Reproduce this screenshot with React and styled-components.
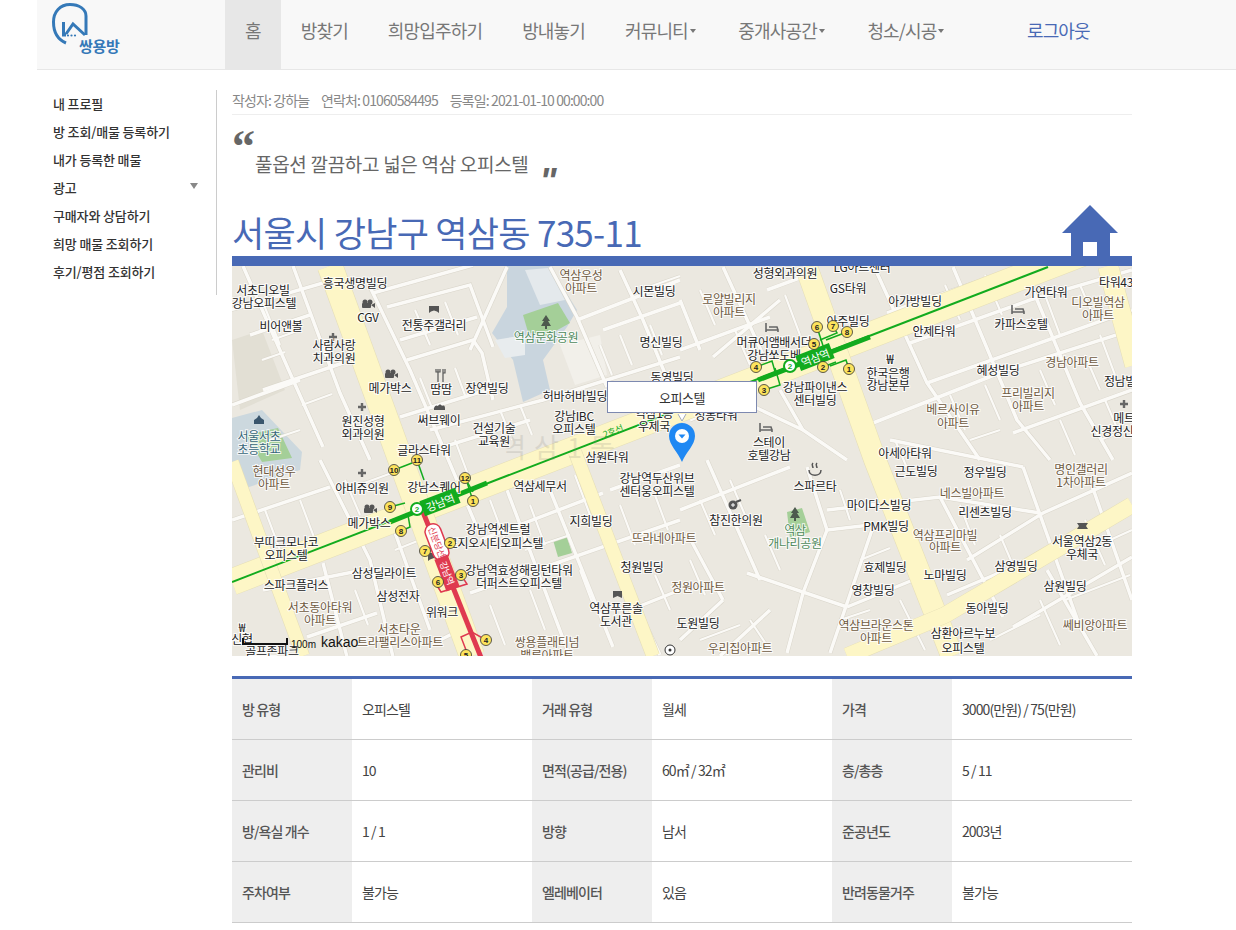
import React from 'react'
import styled, { createGlobalStyle } from 'styled-components'

const BLUE = '#4869b5'
const LOGO_BLUE = '#3579b8'
const FONT = '"Noto Sans CJK KR", "Noto Sans", sans-serif'

const GlobalStyle = createGlobalStyle`
  html, body {
    margin: 0;
    padding: 0;
    background: #fff;
    font-family: ${FONT};
  }
`

const Page = styled.div`
  width: 1236px;
  padding-left: 37px;
  box-sizing: border-box;
`

const Header = styled.header`
  display: flex;
  height: 70px;
  box-sizing: border-box;
  background: #f8f8f8;
  border-bottom: 1px solid #e7e7e7;
`

const LogoBox = styled.a`
  display: block;
  width: 188px;
  flex: none;
`

const Nav = styled.nav`
  display: flex;
  height: 69px;
`

const NavItem = styled.a`
  display: flex;
  align-items: center;
  padding: 0 20px 10px;
  margin-left: ${props => props.$offset || 0}px;
  font-size: 18px;
  letter-spacing: -0.85px;
  color: ${props => (props.$logout ? BLUE : '#777')};
  background: ${props => (props.$active ? '#e7e7e7' : 'transparent')};
`

const Caret = styled.span`
  display: inline-block;
  margin: 3px 0 0 2px;
  padding-right: 0;
  border-top: 4px solid #777;
  border-left: 3.5px solid transparent;
  border-right: 3.5px solid transparent;
  box-sizing: content-box;
  margin-right: 2.5px;
`

const Body = styled.div`
  display: flex;
  padding-top: 20px;
`

const Sidebar = styled.aside`
  width: 163px;
  height: 205px;
  flex: none;
  padding-left: 16px;
  border-right: 1px solid #ccc;
  margin-right: 15px;
`

const SideList = styled.ul`
  list-style: none;
  margin: -1px 0 0;
  padding: 0;
`

const SideItem = styled.li`
  display: flex;
  align-items: center;
  justify-content: space-between;
  height: 28px;
  padding-right: 18px;
  font-size: 13px;
  font-weight: 500;
  letter-spacing: -0.15px;
  color: #333;
`

const SideCaret = styled.span`
  display: block;
  margin-top: -2px;
  border-top: 6px solid #888;
  border-left: 4px solid transparent;
  border-right: 4px solid transparent;
`

const Main = styled.main`
  width: 900px;
  flex: none;
`

const Meta = styled.div`
  display: flex;
  gap: 12px;
  height: 25px;
  align-items: center;
  border-bottom: 1px solid #eee;
  padding-bottom: 4px;
  box-sizing: border-box;
  font-size: 14px;
  letter-spacing: -0.9px;
  color: #888;
`

const Quote = styled.blockquote`
  margin: 0;
  height: 66px;
  padding-top: 8px;
  color: #666;
`

const QuoteOpen = styled.div`
  height: 28px;
  font-family: "Liberation Serif", serif;
  font-weight: 700;
  font-size: 46px;
  line-height: 48px;
  color: #666;
  overflow: hidden;
`

const QuoteText = styled.span`
  margin-left: 23px;
  font-size: 19px;
  line-height: 26px;
  letter-spacing: -0.3px;
`

const QuoteClose = styled.span`
  margin-left: 11px;
  font-family: "Liberation Sans", sans-serif;
  font-style: italic;
  font-weight: 700;
  font-size: 36px;
  line-height: 26px;
  vertical-align: -22px;
  color: #666;
`

const TitleRow = styled.div`
  display: flex;
  align-items: flex-end;
  justify-content: space-between;
  height: 67px;
  border-bottom: 10px solid ${BLUE};
`

const Title = styled.h1`
  margin: 0 0 -1px;
  font-size: 35px;
  font-weight: 400;
  line-height: 50px;
  letter-spacing: -0.7px;
  color: ${BLUE};
`

const HouseIcon = styled.svg`
  display: block;
  margin-right: 14px;
`

const MapCanvas = styled.div`
  position: relative;
  height: 390px;
  overflow: hidden;
  background: #ebe8e0;
`

const MapDrawing = styled.svg`
  display: block;
`

const MapLabel = styled.text`
  font-family: ${FONT};
  font-size: ${props => props.$size || 12}px;
  letter-spacing: -0.3px;
  text-anchor: middle;
  dominant-baseline: central;
  paint-order: stroke;
  stroke: rgba(255, 255, 255, 0.85);
  stroke-width: 2px;
  fill: ${props => ({ brown: '#6f5a41', green: '#4f8a5c', teal: '#37677a' }[props.$kind] || '#222')};
`

const BadgeText = styled.text`
  font-family: "Liberation Sans", sans-serif;
  font-size: 8px;
  font-weight: 700;
  text-anchor: middle;
  dominant-baseline: central;
  fill: ${props => props.$fill || '#222'};
`

const StationText = styled.text`
  font-family: ${FONT};
  font-size: ${props => props.$size || 11}px;
  letter-spacing: -0.3px;
  text-anchor: middle;
  dominant-baseline: central;
  fill: ${props => props.$fill || '#fff'};
`

const Watermark = styled.text`
  font-family: ${FONT};
  font-size: 27px;
  letter-spacing: 8px;
  text-anchor: middle;
  fill: #8d8a80;
  opacity: 0.2;
`

const KakaoText = styled.text`
  font-family: "Liberation Sans", sans-serif;
  font-size: ${props => props.$size}px;
  fill: #111;
`

const InfoWindow = styled.div`
  position: absolute;
  left: 375px;
  top: 115px;
  width: 150px;
  height: 32px;
  box-sizing: border-box;
  display: flex;
  align-items: center;
  justify-content: center;
  background: #fff;
  border: 1px solid #7d89b0;
  font-size: 13px;
  letter-spacing: -0.4px;
  color: #333;
`

const TableWrap = styled.div`
  margin-top: 20px;
  border-top: 3px solid ${BLUE};
`

const DetailTable = styled.table`
  width: 900px;
  border-collapse: collapse;
  table-layout: fixed;
`

const Row = styled.tr`
  height: 61px;
  border-bottom: 1px solid #ccc;

  &:first-child {
    height: 60px;
  }
`

const HeadCell = styled.th`
  width: 120px;
  padding: 0 0 0 10px;
  box-sizing: border-box;
  background: #eee;
  text-align: left;
  font-size: 14px;
  font-weight: 500;
  letter-spacing: -0.9px;
  color: #555;
`

const ValueCell = styled.td`
  width: 180px;
  padding: 0 0 0 10px;
  box-sizing: border-box;
  font-size: 14px;
  letter-spacing: -0.9px;
  color: #444;
`

const sideItems = ['내 프로필', '방 조회/매물 등록하기', '내가 등록한 매물', '광고', '구매자와 상담하기', '희망 매물 조회하기', '후기/평점 조회하기']

const rows = [
  ['방 유형', '오피스텔', '거래 유형', '월세', '가격', '3000(만원) / 75(만원)'],
  ['관리비', '10', '면적(공급/전용)', '60㎡ / 32㎡', '층/총층', '5 / 11'],
  ['방/욕실 개수', '1 / 1', '방향', '남서', '준공년도', '2003년'],
  ['주차여부', '불가능', '엘레베이터', '있음', '반려동물거주', '불가능'],
]

const bigRoads = [
  ['232,582 1132,234', 26],
  ['330,266 472,656', 25],
  ['806,266 875,460 952,656', 22],
  ['1132,505 945,615 847,656', 16],
  ['1108,266 1135,365', 20],
  ['232,462 303,656', 13],
  ['575,452 653,656', 13],
]

const smallRoads = [
  // 좌상단
  '243,266 290,373 323,447', '293,266 340,393 370,460', '230,310 323,283', '263,390 343,363',
  '370,287 410,370 443,447 478,530', '373,293 473,265', '387,307 470,285 493,347', '400,340 477,317',
  '407,360 473,340 482,353 493,400', '400,417 493,388', '430,430 543,400 680,357', '470,350 507,267',
  '550,267 577,317 607,387', '577,320 680,280', '603,330 680,303', '620,270 643,320 680,410',
  '232,405 300,380', '250,335 310,315', '443,447 530,420',
  // 우상단
  '723,267 770,370', '713,357 780,300', '680,350 770,317', '767,290 813,273', '877,273 927,383 980,460',
  '953,267 1017,420 1050,460', '1030,283 1080,403 1113,460', '887,313 1013,270', '910,343 1030,300 1132,270',
  '873,423 1007,370 1132,330', '927,383 1020,350 1132,310', '1013,433 1132,390', '780,390 803,430 847,460',
  '690,420 740,400 803,430', '680,300 700,350',
  // 좌하단
  '320,460 370,560 393,657', '323,563 347,657', '393,527 430,630', '470,593 680,520', '507,490 570,657',
  '550,490 613,647', '480,540 603,493', '263,590 363,570', '307,637 377,613', '232,520 330,487', '440,640 470,625',
  '610,490 680,465', '615,560 660,655', '630,610 680,590',
  // 우하단
  '680,510 790,467', '687,533 723,600', '707,460 760,580', '747,573 847,607', '807,467 827,530 803,593 787,653',
  '827,530 870,525', '873,527 830,653', '847,607 913,580', '827,510 940,497 1040,513', '940,497 1003,617',
  '1023,467 1080,627', '967,560 1043,513 1132,473', '947,595 1013,567', '1013,627 1132,557', '1047,570 1097,656',
  '890,440 1023,467', '723,600 680,640', '770,610 720,656', '1090,480 1132,600',
]

const alleys = [
  '262,300 280,345', '300,330 272,340', '270,440 300,430', '302,405 332,394', '262,360 285,352',
  '415,310 430,345', '445,302 458,335', '420,378 432,408', '455,368 466,398', '500,410 512,440',
  '520,405 532,435', '455,440 470,480', '600,345 612,375', '620,335 632,365', '650,325 662,355',
  '640,290 680,276', '700,290 715,325', '735,330 750,365', '785,295 800,335', '905,300 920,335',
  '945,285 960,320', '985,275 1002,315', '1045,295 1060,335', '1080,285 1095,320', '1100,335 1115,375',
  '950,395 965,430', '985,385 1000,420', '1040,370 1055,405', '1085,355 1100,390', '1105,400 1120,435',
  '895,440 910,475', '1060,420 1075,455', '970,440 1000,430', '1100,440 1125,430',
  '345,480 360,515', '400,470 345,490', '300,500 315,540', '265,510 280,550', '355,590 368,625',
  '420,540 395,550', '490,500 505,540', '530,505 545,545', '575,475 590,515', '525,550 570,535',
  '490,605 505,645', '530,590 545,630', '580,570 595,610', '620,505 635,545', '655,495 668,530',
  '700,500 715,535', '730,480 745,515', '765,535 780,570', '840,490 850,520', '900,510 915,550',
  '860,560 890,548', '840,620 870,610', '900,600 925,650', '960,505 975,545', '1000,535 1015,570',
  '1040,600 1060,645', '1085,520 1105,565', '1110,540 1132,530', '1065,600 1130,575', '990,640 1040,615',
  '700,640 740,625', '750,620 770,650', '655,575 670,610', '690,560 705,595',
]

const blocks = [
  ['507,266 550,266 577,310 567,327 543,360 550,390 523,402 513,360 492,333 507,307', '#c9d5de'],
  ['232,418 262,410 302,452 300,470 240,490 232,470', '#ccd8de'],
  ['523,315 558,303 570,323 545,337 528,332', '#a4cf98'],
  ['246,435 278,428 292,458 262,462', '#a4cf98'],
  ['787,512 802,508 810,532 790,538', '#a4cf98'],
  ['553,540 567,537 572,553 558,557', '#a4cf98'],
  ['495,340 525,335 525,355 505,358', '#e8ecee'],
  ['525,270 548,268 565,300 540,305', '#e4e9ec'],
  ['232,340 262,330 285,390 240,410', '#e2dfd4'],
  ['560,345 600,335 607,375 575,385', '#f2f0ea'],
]

const labels = [
  ['서초디오빌', 263, 289], ['강남오피스텔', 264, 302], ['비어앤볼', 281, 325], ['사람사랑', 334, 344], ['치과의원', 334, 357],
  ['메가박스', 390, 387], ['CGV', 368, 316], ['흥국생명빌딩', 355, 282], ['전통주갤러리', 434, 324], ['땀땀', 441, 388],
  ['장연빌딩', 487, 387], ['써브웨이', 439, 419], ['건설기술', 494, 427], ['교육원', 494, 440], ['허바허바빌딩', 575, 395],
  ['강남IBC', 574, 415], ['오피스텔', 574, 428], ['역삼우성', 581, 274, 'brown'], ['아파트', 581, 287, 'brown'], ['시몬빌딩', 654, 290],
  ['역삼문화공원', 546, 336, 'green'], ['명신빌딩', 661, 341], ['동영빌딩', 672, 376], ['원진성형', 363, 420], ['외과의원', 363, 433],
  ['글라스타워', 424, 449], ['서울서초', 259, 435, 'teal'], ['초등학교', 259, 448, 'teal'], ['삼원타워', 607, 456], ['현대성우', 274, 470, 'brown'],
  ['아파트', 274, 483, 'brown'], ['성형외과의원', 785, 272], ['LG아트센터', 862, 266], ['GS타워', 848, 287], ['아가방빌딩', 915, 300],
  ['가연타워', 1046, 291], ['타워43', 1116, 281], ['디오빌역삼', 1098, 301, 'brown'], ['아파트', 1098, 314, 'brown'], ['카파스호텔', 1021, 323],
  ['안제타워', 934, 330], ['로얄빌리지', 729, 298, 'brown'], ['아파트', 729, 311, 'brown'], ['아주빌딩', 848, 320], ['머큐어앰배서더', 774, 341],
  ['강남쏘도베', 774, 354], ['한국은행', 888, 372], ['강남본부', 888, 384], ['혜성빌딩', 998, 369], ['경남아파트', 1072, 361, 'brown'],
  ['정남빌', 1120, 380], ['강남파이낸스', 815, 386], ['센터빌딩', 815, 399], ['프리빌리지', 1028, 392, 'brown'], ['아파트', 1028, 405, 'brown'],
  ['베르사이유', 953, 408, 'brown'], ['아파트', 953, 422, 'brown'], ['메트', 1124, 417], ['신경정신', 1112, 430], ['스테이', 769, 441],
  ['호텔강남', 769, 454], ['아세아타워', 905, 452], ['성동타워', 716, 414], ['역삼1동', 654, 412], ['우제국', 654, 425],
  ['근도빌딩', 916, 470], ['정우빌딩', 985, 471], ['명인갤러리', 1081, 468, 'brown'], ['1차아파트', 1081, 481, 'brown'], ['스파르타', 815, 485],
  ['네스빌아파트', 972, 492, 'brown'], ['마이다스빌딩', 879, 504], ['리센츠빌딩', 985, 511], ['PMK빌딩', 886, 525], ['역삼프리마빌', 945, 534, 'brown'],
  ['아파트', 945, 546, 'brown'], ['역삼', 795, 529, 'green'], ['개나리공원', 795, 542, 'green'], ['참진한의원', 736, 519], ['노마빌딩', 945, 574],
  ['삼영빌딩', 1016, 565], ['서울역삼2동', 1082, 540], ['우체국', 1082, 553], ['효제빌딩', 885, 566], ['영창빌딩', 873, 589],
  ['삼원빌딩', 1065, 585], ['동아빌딩', 987, 607], ['쎄비앙아파트', 1095, 624, 'brown'], ['역삼브라운스톤', 876, 624, 'brown'], ['아파트', 876, 637, 'brown'],
  ['삼환아르누보', 963, 632], ['오피스텔', 963, 647], ['도원빌딩', 698, 622], ['우리집아파트', 740, 647, 'brown'], ['정원아파트', 698, 586, 'brown'],
  ['강남역두산위브', 657, 477], ['센터웅오피스텔', 657, 490], ['역삼세무서', 540, 485], ['지희빌딩', 591, 520], ['뜨라네아파트', 664, 537, 'brown'],
  ['청원빌딩', 642, 566], ['강남스퀘어', 434, 486], ['아비쥬의원', 362, 487], ['메가박스', 369, 522], ['부띠크모나코', 286, 541],
  ['오피스텔', 286, 554], ['스파크플러스', 296, 584], ['서초동아타워', 320, 606, 'brown'], ['아파트', 320, 619, 'brown'], ['삼성딜라이트', 384, 572],
  ['삼성전자', 398, 595], ['위워크', 442, 611], ['서초타운', 399, 628, 'brown'], ['트라팰리스아파트', 400, 641, 'brown'], ['강남역센트럴', 498, 528],
  ['르지오시티오피스텔', 495, 542], ['강남역효성해링턴타워', 519, 569], ['더퍼스트오피스텔', 519, 582], ['쌍용플래티넘', 547, 641, 'brown'], ['밸류아파트', 547, 654, 'brown'],
  ['역삼푸른솔', 616, 607], ['도서관', 616, 620], ['신협', 242, 638], ['골프존파크', 272, 650],
]

const exits = [
  [1, 849, 369], [2, 823, 367], [3, 764, 390], [4, 756, 367], [5, 814, 344], [6, 817, 327], [7, 833, 326], [8, 847, 332],
  [10, 394, 470], [11, 417, 460], [12, 465, 478], [1, 473, 501], [9, 390, 507], [8, 401, 531], [7, 425, 551], [2, 450, 543],
  [3, 461, 575], [6, 438, 582], [4, 486, 640], [5, 466, 655],
]

const greenLinks = [
  '849,369 846,360 830,366', '823,367 836,362', '764,390 780,385 775,368', '756,367 772,361 776,375', '814,344 822,362',
  '817,327 826,355', '833,326 837,333 820,340', '847,332 826,340', '394,470 412,463', '417,460 424,480',
  '465,478 473,492', '473,501 467,482', '390,507 405,503', '401,531 410,527 408,515', '425,551 434,546',
]

const redLinks = ['461,575 467,584 441,592 436,584', '486,640 472,632 461,637 466,650']

const crosses = [[333, 337], [362, 407], [362, 473], [1124, 404]]
const cameras = [[368, 304], [391, 374], [370, 509]]
const beds = [[772, 328], [1018, 310], [766, 428]]

const Logo = () => (
  <svg width="100" height="64" viewBox="0 0 100 64">
    <path d="M49 35 V16 C49 9 42 4.500 33 4.500 C23 4.500 16.500 12 16.500 22 C16.500 33 22 40 29 43" fill="none" stroke={LOGO_BLUE} strokeWidth="3" />
    <path d="M26.500 22 V35 H29 M29 34 L36 24 L48 35" fill="none" stroke={LOGO_BLUE} strokeWidth="3" />
    <circle cx="31" cy="35.500" r="1.100" fill={LOGO_BLUE} />
    <circle cx="34.500" cy="35.500" r="1.100" fill={LOGO_BLUE} />
    <circle cx="38" cy="35.500" r="1.100" fill={LOGO_BLUE} />
    <text x="42" y="52" fontSize="15" fontWeight="700" letterSpacing="-0.3" fill={LOGO_BLUE} fontFamily={FONT}>쌍용방</text>
  </svg>
)

const House = () => (
  <HouseIcon width="56" height="51" viewBox="0 0 56 51">
    <path d="M28 0 L56 28 H48 V51 H9 V28 H0 Z" fill={BLUE} />
    <rect x="21" y="37" width="14" height="14" fill="#fff" />
  </HouseIcon>
)

const CityMap = () => (
  <MapDrawing width="900" height="390" viewBox="232 266 900 390">
    {blocks.map(([points, fill]) => <polygon key={points} points={points} fill={fill} />)}
    {smallRoads.map(points => (
      <polyline key={points} points={points} fill="none" stroke="#d9d5ca" strokeWidth="4.500" />
    ))}
    {alleys.map(points => (
      <polyline key={points} points={points} fill="none" stroke="#d9d5ca" strokeWidth="3.200" />
    ))}
    {smallRoads.map(points => (
      <polyline key={points} points={points} fill="none" stroke="#fbfaf7" strokeWidth="3.500" />
    ))}
    {alleys.map(points => (
      <polyline key={points} points={points} fill="none" stroke="#fbfaf7" strokeWidth="2.200" />
    ))}
    {bigRoads.map(([points, width]) => (
      <g key={points} fill="none">
        <polyline points={points} stroke="#e4ddb6" strokeWidth={width + 1} />
        <polyline points={points} stroke="#fdf6c6" strokeWidth={width} />
      </g>
    ))}

    {/* 2호선, 신분당선 */}
    <line x1="232" y1="582" x2="1048" y2="267" stroke="#12ab1e" strokeWidth="2" />
    <line x1="758" y1="380" x2="870" y2="337" stroke="#12ab1e" strokeWidth="5" />
    <line x1="390" y1="522" x2="487" y2="483" stroke="#12ab1e" strokeWidth="5" />
    <line x1="423" y1="512" x2="490" y2="680" stroke="#df3a50" strokeWidth="5" />
    {greenLinks.map(points => (
      <polyline key={points} points={points} fill="none" stroke="#12ab1e" strokeWidth="1.500" />
    ))}
    {redLinks.map(points => (
      <polyline key={points} points={points} fill="none" stroke="#df3a50" strokeWidth="1.500" />
    ))}

    <Watermark x="562" y="458">역삼1동</Watermark>

    {/* 지도 아이콘 */}
    {crosses.map(([x, y]) => (
      <path key={x} d={`M${x - 4} ${y}H${x + 4}M${x} ${y - 4}V${y + 4}`} stroke="#666" strokeWidth="2.400" />
    ))}
    {cameras.map(([x, y]) => (
      <g key={x} fill="#555">
        <circle cx={x - 3} cy={y - 2} r="2.500" />
        <circle cx={x + 2} cy={y - 2} r="2.500" />
        <rect x={x - 6} y={y - 1} width="9" height="5" rx="1" />
        <path d={`M${x + 3} ${y + 1}l4 -2v5z`} />
      </g>
    ))}
    {beds.map(([x, y]) => (
      <path key={x} d={`M${x - 6} ${y - 5}v9M${x - 6} ${y + 2}h12v2M${x - 3} ${y - 1}h8l1 3`} fill="none" stroke="#666" strokeWidth="1.600" />
    ))}
    <path d="M429 306h10v7l-2 -1.500 -3 -1 -3 1 -2 1.500z" fill="#555" />
    <path d="M428 553h11v8l-2 -1.500 -3 -1.500 -4 1.500 -2 1.500z" fill="#555" />
    <path d="M438 369v6M436 369v3h4v-3M443 369v13M438 375v7M445 369v4h-2" fill="none" stroke="#555" strokeWidth="1.200" />
    <path d="M434 408c1-3 3-3 4-2 1-2 3-2 4 0 2-1 3 0 3 2v2h-11z" fill="#555" />
    <path d="M546 315l-4 6h2l-3 5h10l-3-5h2zM545 326h2v3h-2z" fill="#4d5a4e" />
    <path d="M795 507l-4 6h2l-3 5h10l-3-5h2zM794 518h2v3h-2z" fill="#4d5a4e" />
    <path d="M259 415l-2 3-3 2v4h10v-4l-3-2z" fill="#3a566d" />
    <path d="M813 463c-2 2 0 3 0 5M817 463c-2 2 0 3 0 5M809 470c0 7 12 7 12 0" fill="none" stroke="#555" strokeWidth="1.500" />
    <path d="M613 591h9v7l-4.500-2-4.500 2z" fill="#555" />
    <circle cx="733" cy="505" r="4.500" fill="#555" />
    <path d="M736 502l5-2" stroke="#555" strokeWidth="2" />
    <path d="M735 505h-4M733 503v4" stroke="#fff" strokeWidth="1" />
    <path d="M1077 523h11l-2 3 2 3h-11l2-3z" fill="#555" />
    <MapLabel x="890" y="358" $size="13">₩</MapLabel>
    <MapLabel x="242" y="626" $size="12">₩</MapLabel>

    {labels.map(([text, x, y, kind]) => (
      <MapLabel key={`${text}${x}${y}`} x={x} y={y} $kind={kind}>{text}</MapLabel>
    ))}

    <StationText x="613" y="431" $size="9" $fill="#12ab1e" transform="rotate(-21 613 431)">2호선</StationText>

    {/* 역 표시 */}
    <g transform="rotate(-21 815 357)">
      <rect x="797" y="349" width="36" height="16" fill="#12ab1e" />
      <StationText x="815" y="357">역삼역</StationText>
    </g>
    <circle cx="790" cy="366" r="6" fill="#fff" stroke="#12ab1e" strokeWidth="2" />
    <BadgeText x="790" y="366" $fill="#12ab1e">2</BadgeText>
    <g transform="rotate(-21 440 502)">
      <rect x="421" y="494" width="38" height="16" fill="#12ab1e" />
      <StationText x="440" y="502">강남역</StationText>
    </g>
    <circle cx="417" cy="509" r="6" fill="#fff" stroke="#12ab1e" strokeWidth="2" />
    <BadgeText x="417" y="509" $fill="#12ab1e">2</BadgeText>
    <g transform="rotate(69 437 542)">
      <rect x="418" y="534" width="38" height="16" rx="8" fill="#fff" stroke="#df3a50" strokeWidth="1.500" />
      <StationText x="437" y="542" $size="9" $fill="#df3a50">신분당선</StationText>
    </g>
    <g transform="rotate(69 447 573)">
      <rect x="430" y="566" width="34" height="14" fill="#df3a50" />
      <StationText x="447" y="573" $size="9">강남역</StationText>
    </g>

    {exits.map(([n, x, y]) => (
      <g key={`${n}-${x}`}>
        <circle cx={x} cy={y} r="5.500" fill="#fce35c" stroke="#333" strokeWidth="0.800" />
        <BadgeText x={x} y={y}>{n}</BadgeText>
      </g>
    ))}

    {/* 축척, 로고 */}
    <path d="M243 638v6h44v-6" fill="none" stroke="#111" strokeWidth="2" />
    <KakaoText x="291" y="648" $size="10">100m</KakaoText>
    <KakaoText x="321" y="647" $size="14">kakao</KakaoText>
    <circle cx="670" cy="650" r="5" fill="#fff" stroke="#333" strokeWidth="1" />
    <circle cx="670" cy="650" r="1.500" fill="#333" />

    {/* 마커 */}
    <path d="M678 414l4 7 4-7" fill="#fff" stroke="#8a94b4" strokeWidth="0.800" />
    <path d="M682 462C678 452 669 445 669 436A13 13 0 0 1 695 436C695 445 686 452 682 462Z" fill="#1f88f3" />
    <circle cx="682" cy="436" r="7" fill="#fff" />
    <path d="M678.500 434.500h7l-3.500 4z" fill="#1f88f3" />
  </MapDrawing>
)

const App = () => (
  <Page>
    <GlobalStyle />
    <Header>
      <LogoBox><Logo /></LogoBox>
      <Nav>
        <NavItem $active>홈</NavItem>
        <NavItem>방찾기</NavItem>
        <NavItem>희망입주하기</NavItem>
        <NavItem>방내놓기</NavItem>
        <NavItem>커뮤니티<Caret /></NavItem>
        <NavItem>중개사공간<Caret /></NavItem>
        <NavItem>청소/시공<Caret /></NavItem>
        <NavItem $logout $offset={40}>로그아웃</NavItem>
      </Nav>
    </Header>
    <Body>
      <Sidebar>
        <SideList>
          {sideItems.map(item => (
            <SideItem key={item}>
              {item}
              {item === '광고' && <SideCaret />}
            </SideItem>
          ))}
        </SideList>
      </Sidebar>
      <Main>
        <Meta>
          <span>작성자: 강하늘</span>
          <span>연락처: 01060584495</span>
          <span>등록일: 2021-01-10 00:00:00</span>
        </Meta>
        <Quote>
          <QuoteOpen>“</QuoteOpen>
          <QuoteText>풀옵션 깔끔하고 넓은 역삼 오피스텔</QuoteText>
          <QuoteClose>"</QuoteClose>
        </Quote>
        <TitleRow>
          <Title>서울시 강남구 역삼동 735-11</Title>
          <House />
        </TitleRow>
        <MapCanvas>
          <CityMap />
          <InfoWindow>오피스텔</InfoWindow>
        </MapCanvas>
        <TableWrap>
          <DetailTable>
            <tbody>
              {rows.map(row => (
                <Row key={row[0]}>
                  {row.map((cell, i) => (i % 2 === 0
                    ? <HeadCell key={cell}>{cell}</HeadCell>
                    : <ValueCell key={`${row[0]}-${i}`}>{cell}</ValueCell>))}
                </Row>
              ))}
            </tbody>
          </DetailTable>
        </TableWrap>
      </Main>
    </Body>
  </Page>
)

export default App
